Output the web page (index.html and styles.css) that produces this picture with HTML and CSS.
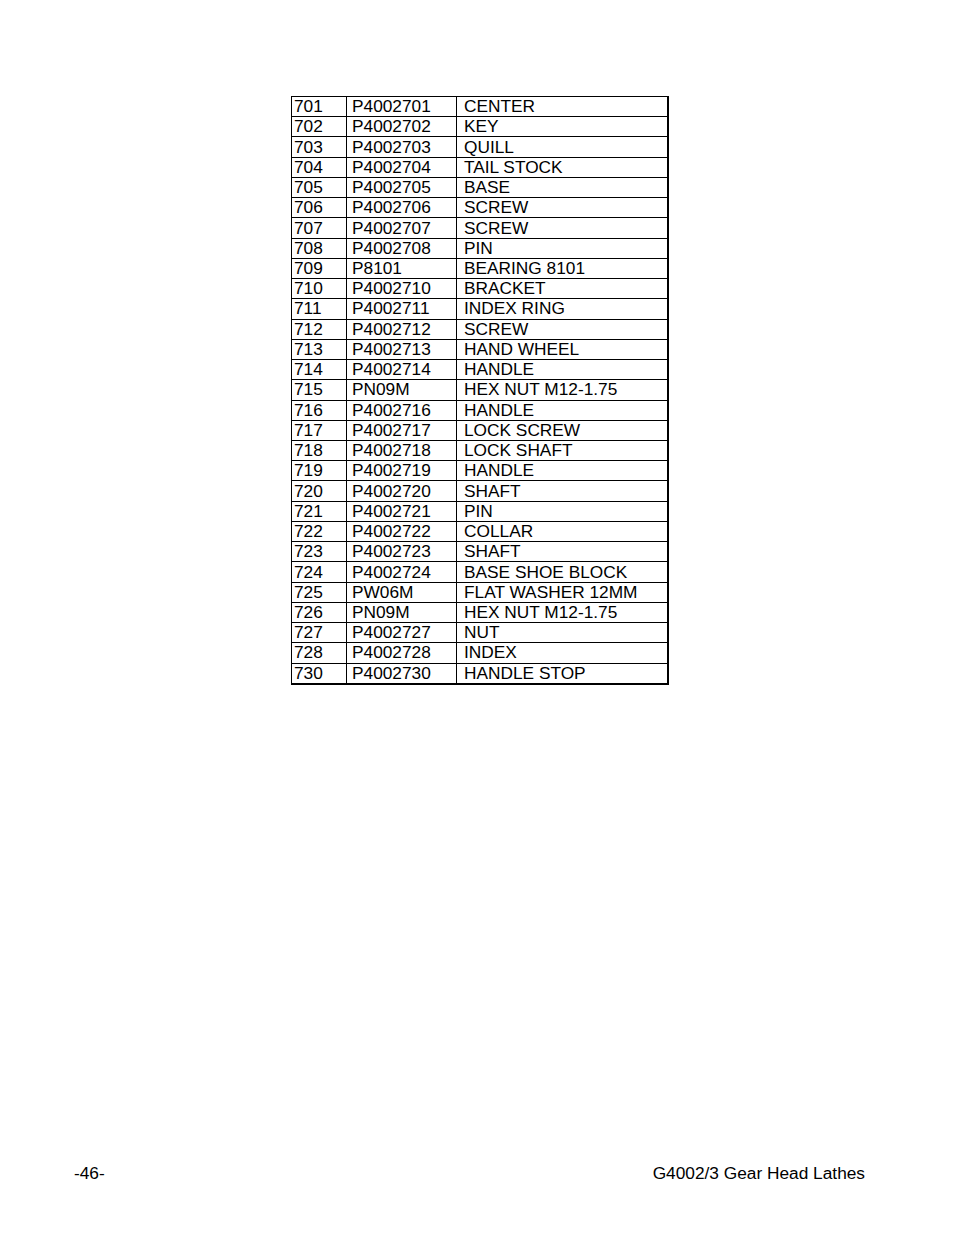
FILE: index.html
```html
<!DOCTYPE html>
<html>
<head>
<meta charset="utf-8">
<link rel="stylesheet" href="styles.css">
</head>
<body>
<div class="page">
<table class="parts">
<colgroup><col class="c1"><col class="c2"><col class="c3"></colgroup>
<tbody>
<tr><td>701</td><td>P4002701</td><td>CENTER</td></tr>
<tr><td>702</td><td>P4002702</td><td>KEY</td></tr>
<tr><td>703</td><td>P4002703</td><td>QUILL</td></tr>
<tr><td>704</td><td>P4002704</td><td>TAIL STOCK</td></tr>
<tr><td>705</td><td>P4002705</td><td>BASE</td></tr>
<tr><td>706</td><td>P4002706</td><td>SCREW</td></tr>
<tr><td>707</td><td>P4002707</td><td>SCREW</td></tr>
<tr><td>708</td><td>P4002708</td><td>PIN</td></tr>
<tr><td>709</td><td>P8101</td><td>BEARING 8101</td></tr>
<tr><td>710</td><td>P4002710</td><td>BRACKET</td></tr>
<tr><td>711</td><td>P4002711</td><td>INDEX RING</td></tr>
<tr><td>712</td><td>P4002712</td><td>SCREW</td></tr>
<tr><td>713</td><td>P4002713</td><td>HAND WHEEL</td></tr>
<tr><td>714</td><td>P4002714</td><td>HANDLE</td></tr>
<tr><td>715</td><td>PN09M</td><td>HEX NUT M12-1.75</td></tr>
<tr><td>716</td><td>P4002716</td><td>HANDLE</td></tr>
<tr><td>717</td><td>P4002717</td><td>LOCK SCREW</td></tr>
<tr><td>718</td><td>P4002718</td><td>LOCK SHAFT</td></tr>
<tr><td>719</td><td>P4002719</td><td>HANDLE</td></tr>
<tr><td>720</td><td>P4002720</td><td>SHAFT</td></tr>
<tr><td>721</td><td>P4002721</td><td>PIN</td></tr>
<tr><td>722</td><td>P4002722</td><td>COLLAR</td></tr>
<tr><td>723</td><td>P4002723</td><td>SHAFT</td></tr>
<tr><td>724</td><td>P4002724</td><td>BASE SHOE BLOCK</td></tr>
<tr><td>725</td><td>PW06M</td><td>FLAT WASHER 12MM</td></tr>
<tr><td>726</td><td>PN09M</td><td>HEX NUT M12-1.75</td></tr>
<tr><td>727</td><td>P4002727</td><td>NUT</td></tr>
<tr><td>728</td><td>P4002728</td><td>INDEX</td></tr>
<tr><td>730</td><td>P4002730</td><td>HANDLE STOP</td></tr>
</tbody>
</table>
<div class="footer">
<span class="pnum">-46-</span>
<span class="title">G4002/3 Gear Head Lathes</span>
</div>
</div>
</body>
</html>
```

FILE: styles.css
```css
html, body {
  margin: 0;
  padding: 0;
  background: #fff;
}
body {
  font-family: "Liberation Sans", Arial, Helvetica, sans-serif;
  font-size: 17.3px;
  color: #000;
}
.page {
  width: 954px;
  height: 1235px;
  padding-top: 96px;
  box-sizing: border-box;
  overflow: hidden;
}
.parts {
  margin-left: 291px;
  border-collapse: collapse;
  table-layout: fixed;
  width: 376px;
  border-right: 2px solid #000;
  border-bottom: 2px solid #000;
}
.c1 { width: 55px; }
.c2 { width: 110px; }
.c3 { width: 211px; }
.parts td {
  border: 1px solid #000;
  padding: 0;
  height: 19.24px;
  line-height: 19px;
  white-space: nowrap;
  vertical-align: middle;
}
.parts td:nth-child(1) { padding-left: 2px; }
.parts td:nth-child(2) { padding-left: 5px; }
.parts td:nth-child(3) { padding-left: 7px; }
.parts td:last-child { border-right: 2px solid #000; }
.parts tr:last-child td { border-bottom: 2px solid #000; }
.footer {
  display: flex;
  justify-content: space-between;
  margin-top: 478px;
  padding-left: 74px;
  padding-right: 89px;
  line-height: 20px;
}
```
